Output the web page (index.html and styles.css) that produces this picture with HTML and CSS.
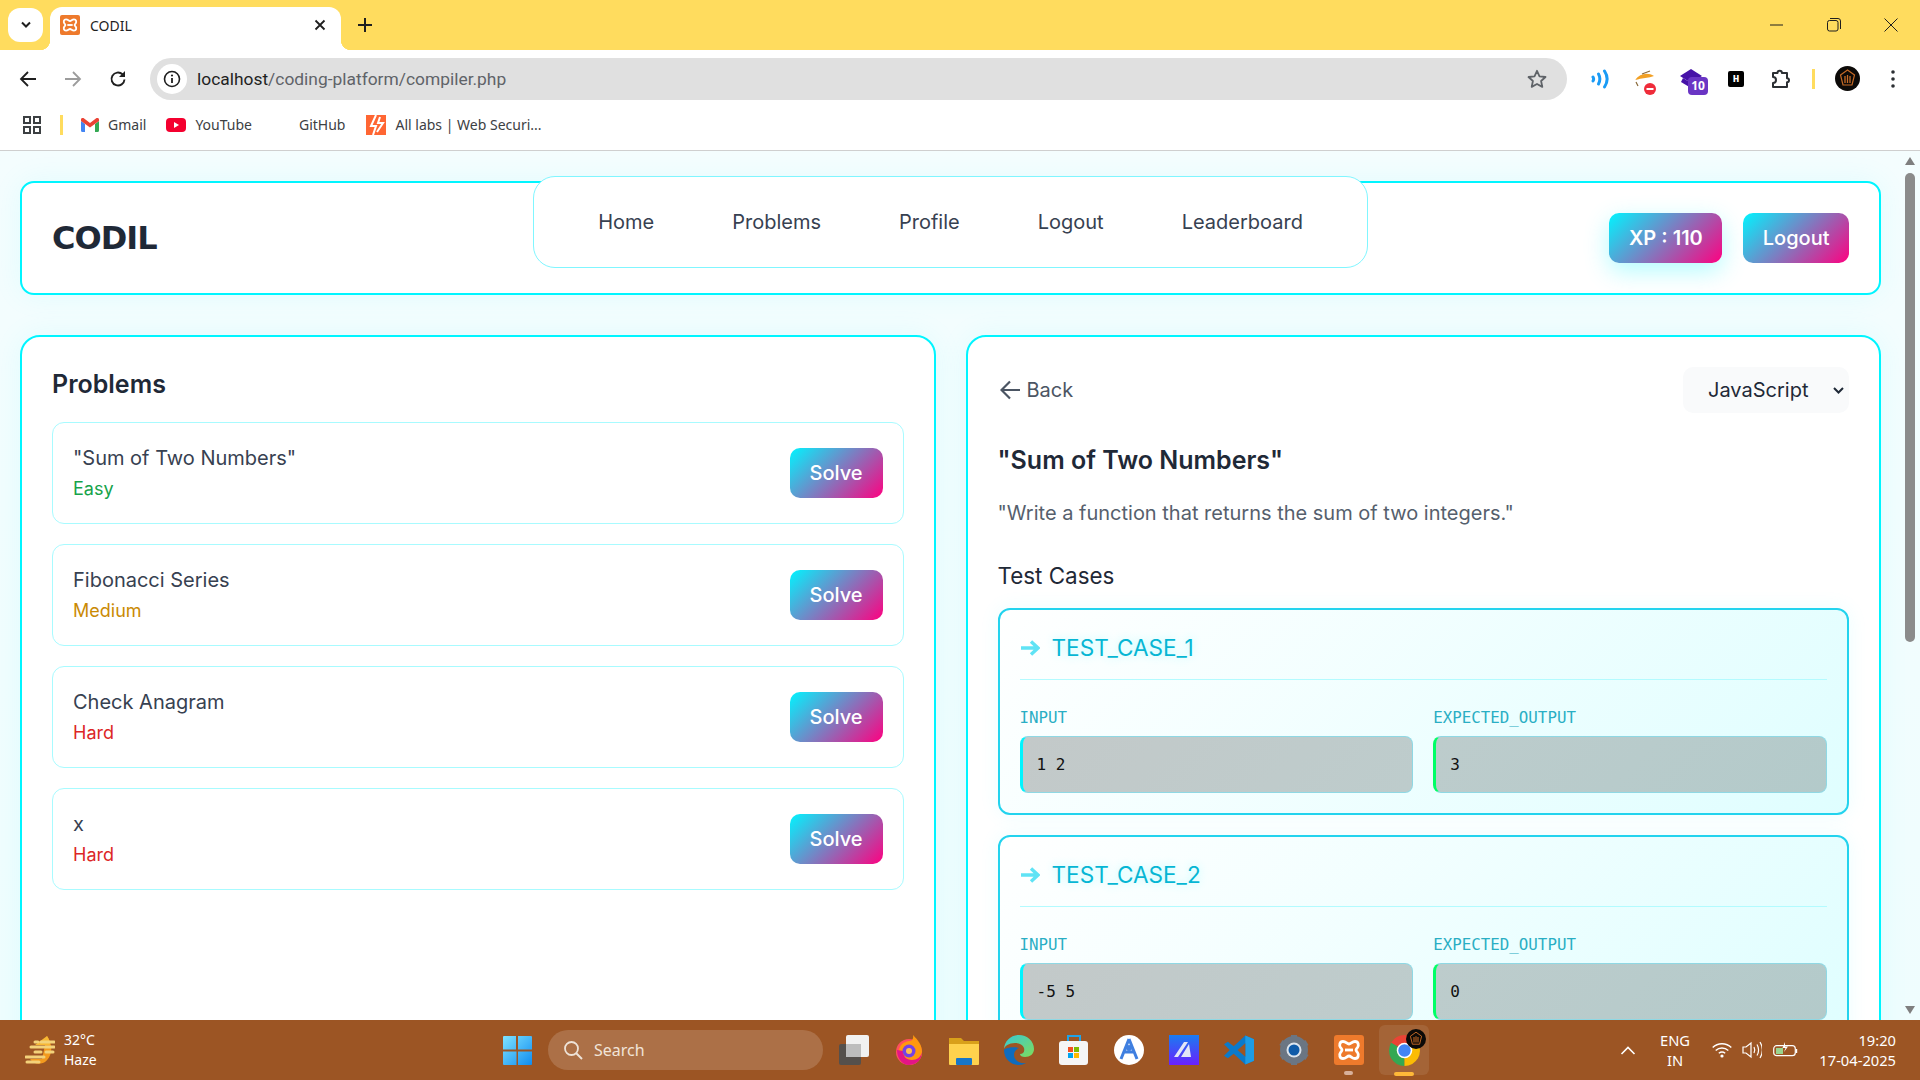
FILE: index.html
```html
<!DOCTYPE html>
<html lang="en">
<head>
<meta charset="utf-8">
<title>CODIL</title>
<link rel="stylesheet" href="styles.css">
</head>
<body>
<svg class="defs" aria-hidden="true">
  <symbol id="xampp" viewBox="0 0 30 30">
    <rect width="30" height="30" rx="3" fill="#ee7a2c"/>
    <path d="M9 6.5c3 0 4 2.500 6 2.500s3-2.500 6-2.500c3.500 0 4 4 2.500 6-.8 1-1.500 1.500-1.500 2.500s.7 1.500 1.500 2.500c1.500 2 1 6-2.500 6-3 0-4-2.500-6-2.500s-3 2.500-6 2.500c-3.500 0-4-4-2.500-6 .8-1 1.500-1.500 1.500-2.500s-.7-1.500-1.500-2.500C5 10.500 5.500 6.500 9 6.500z" fill="none" stroke="#fff" stroke-width="2.800"/>
    <path d="M11 15h8" stroke="#fff" stroke-width="2.800"/>
  </symbol>
  <symbol id="avatar" viewBox="0 0 25 25">
    <circle cx="12.500" cy="12.500" r="12.500" fill="#0c0a08"/>
    <path d="M12.500 4l7 5-2.500 10H8L5.500 9z" fill="none" stroke="#c66a26" stroke-width="1.200"/>
    <path d="M10 10v7M12.500 9v8M15 10v7" stroke="#c66a26" stroke-width="1.300"/>
  </symbol>
</svg>
<div class="screen">
  <div class="tabstrip">
    <div class="tab-menu"><svg width="12" height="8" viewBox="0 0 12 8"><path d="M2 1.500l4 4 4-4" fill="none" stroke="#1f1f1f" stroke-width="2"/></svg></div>
    <div class="tab">
      <svg class="fav" width="20" height="20"><use href="#xampp"/></svg>
      <span class="tab-title">CODIL</span>
      <svg class="tab-x" width="12" height="12" viewBox="0 0 12 12"><path d="M1.500 1.500l9 9M10.500 1.500l-9 9" stroke="#1f1f1f" stroke-width="1.800"/></svg>
    </div>
    <svg class="tab-plus" width="14" height="14" viewBox="0 0 14 14"><path d="M7 0v14M0 7h14" stroke="#1f1f1f" stroke-width="2"/></svg>
    <div class="winctl">
      <svg width="14" height="14" viewBox="0 0 14 14"><path d="M0 7h13" stroke="#1f1f1f"/></svg>
      <svg width="14" height="14" viewBox="0 0 14 14"><rect x=".5" y="2.500" width="10.500" height="10.500" rx="2" fill="none" stroke="#1f1f1f"/><path d="M3 .5h8a2.500 2.500 0 0 1 2.500 2.500v8" fill="none" stroke="#1f1f1f"/></svg>
      <svg width="14" height="14" viewBox="0 0 14 14"><path d="M.5.500l13 13M13.500.5l-13 13" stroke="#1f1f1f"/></svg>
    </div>
  </div>

  <div class="toolbar">
    <svg class="nav-ic" width="18" height="18" viewBox="0 0 18 18"><path d="M17 9H2M9 2L2 9l7 7" fill="none" stroke="#1f1f1f" stroke-width="1.800"/></svg>
    <svg class="nav-ic fw" width="18" height="18" viewBox="0 0 18 18"><path d="M1 9h15M9 2l7 7-7 7" fill="none" stroke="#9c9c9c" stroke-width="1.800"/></svg>
    <svg class="nav-ic rl" width="18" height="18" viewBox="0 0 18 18"><path d="M15.500 9.500A6.500 6.500 0 1 1 13.500 4.300" fill="none" stroke="#1f1f1f" stroke-width="1.900"/><path d="M16 1v6h-6z" fill="#1f1f1f"/></svg>
    <div class="omnibox">
      <div class="info"><svg width="18" height="18" viewBox="0 0 18 18"><circle cx="9" cy="9" r="7.500" fill="none" stroke="#1f1f1f" stroke-width="1.600"/><path d="M9 8v5" stroke="#1f1f1f" stroke-width="1.800"/><circle cx="9" cy="5.500" r="1.100" fill="#1f1f1f"/></svg></div>
      <span class="url"><span class="host">localhost</span>/coding-platform/compiler.php</span>
      <svg class="star" width="20" height="20" viewBox="0 0 20 20"><path d="M10 1.800l2.500 5.500 6 .7-4.400 4 1.200 5.900L10 15l-5.300 2.900 1.200-5.900-4.400-4 6-.7z" fill="none" stroke="#5f6368" stroke-width="1.800" stroke-linejoin="round"/></svg>
    </div>
    <div class="exts">
      <svg class="ext e1" width="18" height="20" viewBox="0 0 18 20"><g fill="none" stroke="#1a9bf5" stroke-width="3" stroke-linecap="round"><path d="M2 8c.8 1.300.8 2.800 0 4"/><path d="M7.500 5c1.800 3.300 1.800 6.700 0 10"/><path d="M13.500 2c3.300 5 3.300 11 0 16"/></g></svg>
      <svg class="ext e2" width="24" height="28" viewBox="0 0 24 28"><path d="M1 12c5-7 13-8 19-4-5 2-12 2-19 4z" fill="#f2a024"/><path d="M8 6l8-3M2 14l2 4" stroke="#8a6a3a" stroke-width="1.200"/><circle cx="16" cy="21" r="6" fill="#ef2c3a"/><path d="M12.500 21h7" stroke="#fff" stroke-width="2"/></svg>
      <div class="ext e3"><svg width="22" height="20" viewBox="0 0 22 20"><path d="M11 0l11 7-11 7L0 7z" fill="#4612a8"/><path d="M3 9l8 5v5L1 13z" fill="#4612a8"/></svg><span class="e3-badge">10</span></div>
      <div class="ext e4">H</div>
      <svg class="ext e5" width="22" height="22" viewBox="0 0 22 22"><path d="M3 5h4.500a2.200 2.200 0 0 1 4.400 0H17v5.200a2 2 0 0 1 0 4V19H3v-4a3 3 0 0 0 0-6z" fill="none" stroke="#2b2f33" stroke-width="2" stroke-linejoin="round"/></svg>
      <span class="ext-sep"></span>
      <svg class="ext e6" width="25" height="25"><use href="#avatar"/></svg>
      <svg class="ext e7" width="6" height="18" viewBox="0 0 6 18"><circle cx="3" cy="2" r="1.800" fill="#2b2f33"/><circle cx="3" cy="9" r="1.800" fill="#2b2f33"/><circle cx="3" cy="16" r="1.800" fill="#2b2f33"/></svg>
    </div>
  </div>

  <div class="bookmarks">
    <svg class="apps" width="18" height="18" viewBox="0 0 18 18"><g fill="none" stroke="#3c4043" stroke-width="2"><rect x="1" y="1" width="6" height="6"/><rect x="11" y="1" width="6" height="6"/><rect x="1" y="11" width="6" height="6"/><rect x="11" y="11" width="6" height="6"/></g></svg>
    <span class="bm-sep"></span>
    <span class="bm bm-gmail"><svg width="18" height="14" viewBox="0 0 18 14"><path d="M0 3v9.500A1.500 1.500 0 0 0 1.500 14H4V6z" fill="#4285f4"/><path d="M14 6v8h2.500a1.500 1.500 0 0 0 1.500-1.500V3z" fill="#34a853"/><path d="M0 3l9 6.500L18 3V1.500C18 0 16.300-.5 15.200.3L9 5 2.800.3C1.700-.5 0 0 0 1.500z" fill="#ea4335"/></svg>Gmail</span>
    <span class="bm bm-yt"><svg width="20" height="14" viewBox="0 0 20 14"><rect width="20" height="14" rx="4" fill="#f4002f"/><path d="M8 4l5 3-5 3z" fill="#fff"/></svg>YouTube</span>
    <span class="bm bm-gh">GitHub</span>
    <span class="bm bm-labs"><svg width="20" height="20" viewBox="0 0 20 20"><rect width="20" height="20" fill="#ff6633"/><path d="M10 0L5 11h5l-3 9M14 2l-2 6h5l-6 9" fill="none" stroke="#fff" stroke-width="2"/></svg>All labs | Web Securi...</span>
  </div>

  <div class="viewport">
    <main class="page">
      <header class="site-head">
        <div class="logo">CODIL</div>
        <nav class="site-nav">
          <a>Home</a><a>Problems</a><a>Profile</a><a>Logout</a><a>Leaderboard</a>
        </nav>
        <div class="head-actions">
          <button class="grad-btn xp">XP : 110</button>
          <button class="grad-btn">Logout</button>
        </div>
      </header>

      <div class="columns">
        <section class="panel">
          <h2 class="panel-title">Problems</h2>
          <div class="problem-list">
            <article class="problem"><div><div class="p-name">"Sum of Two Numbers"</div><div class="p-level easy">Easy</div></div><button class="grad-btn solve">Solve</button></article>
            <article class="problem"><div><div class="p-name">Fibonacci Series</div><div class="p-level medium">Medium</div></div><button class="grad-btn solve">Solve</button></article>
            <article class="problem"><div><div class="p-name">Check Anagram</div><div class="p-level hard">Hard</div></div><button class="grad-btn solve">Solve</button></article>
            <article class="problem"><div><div class="p-name">x</div><div class="p-level hard">Hard</div></div><button class="grad-btn solve">Solve</button></article>
          </div>
        </section>

        <section class="panel">
          <div class="detail-top">
            <span class="back"><svg width="21" height="20" viewBox="0 0 21 20"><path d="M20 10H2M10 1.500L1.500 10l8.500 8.500" fill="none" stroke="#4b5563" stroke-width="2.200"/></svg>Back</span>
            <div class="lang"><span>JavaScript</span><svg width="11" height="7" viewBox="0 0 11 7"><path d="M1 1l4.500 4.500L10 1" fill="none" stroke="#1f2937" stroke-width="2"/></svg></div>
          </div>
          <h2 class="detail-title">"Sum of Two Numbers"</h2>
          <p class="detail-desc">"Write a function that returns the sum of two integers."</p>
          <h3 class="tc-head">Test Cases</h3>

          <div class="tc">
            <div class="tc-title"><svg width="20" height="16" viewBox="0 0 20 16"><path d="M1 8h17M11 1.500L18 8l-7 6.500" fill="none" stroke="#5fe3f5" stroke-width="3.400"/></svg>TEST_CASE_1</div>
            <div class="tc-grid">
              <div><div class="tc-label">INPUT</div><div class="tc-val">1 2</div></div>
              <div><div class="tc-label">EXPECTED_OUTPUT</div><div class="tc-val out">3</div></div>
            </div>
          </div>

          <div class="tc">
            <div class="tc-title"><svg width="20" height="16" viewBox="0 0 20 16"><path d="M1 8h17M11 1.500L18 8l-7 6.500" fill="none" stroke="#5fe3f5" stroke-width="3.400"/></svg>TEST_CASE_2</div>
            <div class="tc-grid">
              <div><div class="tc-label">INPUT</div><div class="tc-val">-5 5</div></div>
              <div><div class="tc-label">EXPECTED_OUTPUT</div><div class="tc-val out">0</div></div>
            </div>
          </div>
        </section>
      </div>
    </main>
    <aside class="scrollbar">
      <span class="sb-up"></span>
      <span class="sb-thumb"></span>
      <span class="sb-down"></span>
    </aside>
  </div>

  <footer class="taskbar">
    <div class="weather">
      <svg width="30" height="28" viewBox="0 0 30 28"><path d="M22 0c6 8 6 20-2 26-5 3-12 2-15-3h12z" fill="#f39a1e"/><path d="M22 0c2 3 3 6 3 9H10z" fill="#f7b733"/><g stroke="#f3d27a" stroke-width="3" stroke-linecap="round"><path d="M10 6h3M16 6h13M6 11h23M10 16h6M21 16h7M1 21h18M2 26h12"/></g></svg>
      <div class="weather-t"><div>32°C</div><div>Haze</div></div>
    </div>
    <svg class="winlogo" width="29" height="29" viewBox="0 0 29 29"><defs><linearGradient id="w" x1="0" y1="0" x2="1" y2="1"><stop offset="0" stop-color="#7fe3ff"/><stop offset="1" stop-color="#0f8cf0"/></linearGradient></defs><path d="M0 1a1 1 0 0 1 1-1h12v13.500H0zM15 0h13a1 1 0 0 1 1 1v12.500H15zM0 15.500h13.500V29H1a1 1 0 0 1-1-1zM15 15.500h14V28a1 1 0 0 1-1 1H15z" fill="url(#w)"/></svg>
    <div class="search"><svg width="20" height="20" viewBox="0 0 20 20"><circle cx="8.500" cy="8.500" r="6.500" fill="none" stroke="#eee3d8" stroke-width="1.800"/><path d="M13 13l6 6" stroke="#eee3d8" stroke-width="2"/></svg>Search</div>
    <div class="dock">
      <svg width="30" height="30" viewBox="0 0 30 30"><rect y="9" width="22" height="21" rx="2" fill="#55504c"/><rect x="7" width="23" height="22" rx="2" fill="#f1f1f1"/><rect x="7" y="9" width="15" height="13" fill="#bdbdbd"/></svg>
      <svg width="30" height="30" viewBox="0 0 30 30"><circle cx="15" cy="17" r="13" fill="#ff4f5e"/><path d="M15 30A13 13 0 0 0 28 17C28 10 24 5 19 0c1 5-2 6-4 6-6 1-9 4-10 9z" fill="#ff980e"/><path d="M3 15c0 9 6 15 12 15 8 0 13-6 13-13-1 5-5 8-10 8-6 0-9-4-9-9z" fill="#e31587"/><circle cx="15" cy="16" r="6.500" fill="#7542e5"/><circle cx="15" cy="16" r="3" fill="#ffbd4f"/></svg>
      <svg width="30" height="30" viewBox="0 0 30 30"><path d="M0 3h12l3 3h15v6H0z" fill="#d9a01a"/><path d="M0 9h30v20a1 1 0 0 1-1 1H1a1 1 0 0 1-1-1z" fill="#ffd24d"/><rect x="7" y="23" width="16" height="7" rx="1" fill="#1776c9"/></svg>
      <svg width="30" height="30" viewBox="0 0 30 30"><defs><linearGradient id="ed" x1="0" y1="0" x2="1" y2="1"><stop offset="0" stop-color="#37c9d6"/><stop offset="1" stop-color="#7fdc5a"/></linearGradient></defs><path d="M0 15C0 6 7 0 15 0c8 0 15 6 15 14 0 5-4 8-9 8-3 0-5-1-5-3 3 0 5-2 4-6-1-3-5-5-9-5-6 0-11 3-11 7z" fill="url(#ed)"/><path d="M0 15C0 24 7 30 15 30c3 0 5-1 7-2-7 1-12-3-12-8 0-3 2-6 5-7-8-2-15 1-15 2z" fill="#0f6cbd"/></svg>
      <svg width="30" height="30" viewBox="0 0 30 30"><path d="M9 6V1h12v5" fill="none" stroke="#1fa3e8" stroke-width="2"/><rect y="6" width="29" height="24" rx="3" fill="#f5f5f5"/><rect x="9" y="12" width="5" height="5" fill="#f25022"/><rect x="15" y="12" width="5" height="5" fill="#7fba00"/><rect x="9" y="18" width="5" height="5" fill="#00a4ef"/><rect x="15" y="18" width="5" height="5" fill="#ffb900"/></svg>
      <svg width="30" height="30" viewBox="0 0 30 30"><circle cx="15" cy="15" r="15" fill="#fff"/><path d="M15 4L7 24M15 4l8 20M9 17h12" fill="none" stroke="#3f7fe0" stroke-width="3"/><circle cx="15" cy="13" r="3" fill="#3f7fe0"/></svg>
      <svg width="30" height="30" viewBox="0 0 30 30"><defs><linearGradient id="bl" x1="0" y1="0" x2="0" y2="1"><stop offset="0" stop-color="#1a7cf0"/><stop offset="1" stop-color="#6a20ff"/></linearGradient></defs><rect width="30" height="30" fill="url(#bl)"/><path d="M5 22L15 7h4L9 22zM12 22l8-13 2 13z" fill="#e4e6f7"/></svg>
      <svg width="30" height="30" viewBox="0 0 31 30"><path d="M22 0l9 4v22l-9 4-12-11-6 4.500L0 21l6-6-6-6 4-2.500L10 11z" fill="#0a7acb"/><path d="M22 0l9 4v22l-9 4z" fill="#1d9ce5"/><path d="M22 8l-8 7 8 7z" fill="#9c5524"/></svg>
      <svg width="30" height="30" viewBox="0 0 30 30"><circle cx="15" cy="15" r="10" fill="none" stroke="#6b7683" stroke-width="8"/><path d="M15 0v6M15 24v6M2 7.500l5 3M23 19.500l5 3M2 22.500l5-3M23 10.500l5-3" stroke="#6b7683" stroke-width="6"/><circle cx="15" cy="15" r="7.500" fill="#dde5ed"/><circle cx="15" cy="15" r="5.500" fill="#0f5ba8"/></svg>
      <div class="dock-item"><svg width="30" height="30"><use href="#xampp"/></svg><span class="pip"></span></div>
      <div class="dock-item active">
        <svg width="31" height="31" viewBox="4 4 40 40"><path d="M24 24L6.700 14A20 20 0 0 1 41.300 14z" fill="#ea4335"/><path d="M24 24L6.700 14A20 20 0 0 0 24 44z" fill="#34a853"/><path d="M24 24L24 44A20 20 0 0 0 41.300 14z" fill="#fbbc04"/><circle cx="24" cy="24" r="10" fill="#fff"/><circle cx="24" cy="24" r="8" fill="#4285f4"/></svg>
        <svg class="dock-avatar" width="20" height="20"><use href="#avatar"/></svg>
        <span class="pip on"></span>
      </div>
    </div>
    <div class="tray">
      <svg class="t-chev" width="16" height="9" viewBox="0 0 16 9"><path d="M1.500 8L8 1.500 14.500 8" fill="none" stroke="#fff" stroke-width="1.600"/></svg>
      <div class="t-lang"><div>ENG</div><div>IN</div></div>
      <svg class="t-wifi" width="20" height="16" viewBox="0 0 20 16"><g fill="none" stroke="#fff" stroke-width="1.400"><path d="M.7 5.500c5-5 13.600-5 18.600 0"/><path d="M3.700 8.500c3.500-3.300 9-3.300 12.600 0"/><path d="M6.800 11.300c2-1.600 4.400-1.600 6.400 0"/></g><circle cx="10" cy="14" r="1.600" fill="#fff"/></svg>
      <svg class="t-vol" width="20" height="18" viewBox="0 0 20 18"><g fill="none" stroke="#fff" stroke-width="1.200"><path d="M1 6h3l5-4v14l-5-4H1z"/><path d="M12 6c1 2 1 4 0 6"/><path d="M15 3.500c2 3.500 2 7.500 0 11"/><path d="M18 1c3 5 3 11 0 16" /></g></svg>
      <svg class="t-bat" width="25" height="16" viewBox="0 0 25 16"><rect x=".7" y="3.700" width="21.600" height="10" rx="3" fill="none" stroke="#fff" stroke-width="1.200"/><rect x="3" y="6" width="7" height="6" fill="#9ad58e"/><path d="M23.500 7v4" stroke="#fff" stroke-width="1.400"/><path d="M12 0l-2.500 6h3L11 10l4-5.500h-3z" fill="#fff"/></svg>
      <div class="t-clock"><div>19:20</div><div>17-04-2025</div></div>
    </div>
  </footer>
</div>
</body>
</html>
```

FILE: styles.css
```css
* { box-sizing: border-box; }
html, body { margin: 0; height: 100%; overflow: hidden; }
body { font-family: Inter, "Noto Sans", sans-serif; color: #1f2937; }
.defs { width: 0; height: 0; display: block; }
.screen { height: 1080px; display: flex; flex-direction: column; }

/* browser chrome */
.tabstrip { height: 50px; background: #ffdc5e; display: flex; align-items: flex-start; padding-left: 8px; flex: none; }
.tab-menu { width: 35px; height: 34px; margin-top: 8px; background: #fff; border-radius: 12px; display: flex; align-items: center; justify-content: center; }
.tab { width: 291px; height: 43px; margin: 7px 0 0 7px; background: #fff; border-radius: 12px 12px 0 0; display: flex; align-items: center; padding: 0 15px 7px 10px; font-family: "Noto Sans", sans-serif; font-size: 14px; position: relative; }
.tab::before, .tab::after { content: ""; position: absolute; bottom: 0; width: 10px; height: 10px; }
.tab::before { left: -10px; background: radial-gradient(circle at 0 0, transparent 10px, #fff 10.5px); }
.tab::after { right: -10px; background: radial-gradient(circle at 100% 0, transparent 10px, #fff 10.5px); }
.fav { flex: none; }
.tab-title { margin-left: 10px; flex: 1; color: #1f1f1f; }
.tab-plus { margin: 18px 0 0 17px; }
.winctl { margin: 18px 22px 0 auto; display: flex; gap: 43px; }

.toolbar { height: 55px; background: #fff; border-radius: 12px 12px 0 0; display: flex; align-items: flex-start; padding: 8px 0 0 19px; flex: none; position: relative; }
.nav-ic { margin-top: 12px; flex: none; }
.fw { margin-left: 27px; }
.rl { margin-left: 27px; }
.omnibox { width: 1417px; height: 42px; margin-left: 23px; background: #e0e0e0; border-radius: 21px; display: flex; align-items: center; padding: 0 20px 0 7px; font-family: Roboto, sans-serif; font-size: 17.400px; color: #5f6368; }
.info { width: 30px; height: 30px; border-radius: 50%; background: #fff; display: flex; align-items: center; justify-content: center; flex: none; }
.url { margin-left: 10px; flex: 1; }
.host { color: #1f1f1f; }
.exts { display: flex; align-items: center; height: 42px; flex: 1; position: relative; }
.ext { position: absolute; }
.e1 { left: 24px; top: 11px; }
.e2 { left: 67px; top: 10px; }
.e3 { left: 113px; top: 11px; width: 30px; height: 30px; }
.e3-badge { position: absolute; left: 8px; top: 8px; width: 20px; height: 18px; background: #6a35c4; color: #fff; border-radius: 4px; font: 700 12px/18px "Noto Sans", sans-serif; text-align: center; }
.e4 { left: 161px; top: 13px; width: 16px; height: 16px; background: #000; color: #fff; border-radius: 2px; font: 700 11px/16px "Liberation Mono", monospace; text-align: center; }
.e5 { left: 203px; top: 10px; }
.ext-sep { position: absolute; left: 245px; top: 11px; width: 3px; height: 20px; background: #ffdc5e; }
.e6 { left: 268px; top: 8px; }
.e7 { left: 323px; top: 12px; }

.bookmarks { height: 46px; background: #fff; border-bottom: 1px solid #cfcfcf; display: flex; align-items: center; padding: 0 0 6px 23px; font-family: "Noto Sans", sans-serif; font-size: 14px; color: #3c4043; flex: none; }
.bm-sep { width: 3px; height: 20px; background: #ffdc5e; margin-left: 19px; }
.bm { display: inline-flex; align-items: center; gap: 9px; }
.bm-gmail { margin-left: 18px; }
.bm-yt { margin-left: 20px; }
.bm-gh { margin-left: 47px; }
.bm-labs { margin-left: 21px; }

/* page */
.viewport { flex: 1; min-height: 0; display: flex; overflow: hidden; background: linear-gradient(180deg, #f4fdfe, #effdfe); }
.page { flex: 1; min-width: 0; padding: 30px 19px 0 20px; }
.scrollbar { width: 20px; flex: none; display: flex; flex-direction: column; align-items: center; padding-top: 6px; padding-bottom: 6px; }
.sb-up { width: 0; height: 0; border: 5px solid transparent; border-top: 0; border-bottom: 8px solid #7f7f7f; }
.sb-thumb { width: 10px; height: 469px; margin-top: 8px; background: #8b8b8b; border-radius: 5px; }
.sb-down { width: 0; height: 0; margin-top: auto; border: 5px solid transparent; border-bottom: 0; border-top: 8px solid #7f7f7f; }

.site-head { height: 114px; background: #fff; border: 2px solid #00f5ff; border-radius: 14px; display: grid; grid-template-columns: 1fr auto 1fr; align-items: center; padding: 0 30px; box-shadow: 0 0 30px rgba(0, 245, 255, .08); }
.logo { font: 700 32px/1 "DejaVu Sans", sans-serif; letter-spacing: -1px; color: #1f2937; }
.site-nav { height: 92px; margin-top: -32px; background: #fff; border: 1px solid #80f6ff; border-radius: 22px; display: flex; align-items: center; gap: 78px; padding: 0 64px; font-size: 20px; color: #374151; }
.head-actions { display: flex; justify-content: flex-end; gap: 21px; }
.grad-btn { height: 50px; border: 0; border-radius: 10px; padding: 0 19.500px; background: linear-gradient(135deg, #00f5ff, #ff0080); color: #fff; font: 500 20px Inter, sans-serif; }
.xp { font-weight: 600; box-shadow: 0 8px 24px rgba(0, 245, 255, .3); }
.solve { width: 93px; padding: 0; }

.columns { display: grid; grid-template-columns: 1fr 1fr; gap: 30px; margin-top: 40px; }
.panel { background: #fff; border: 2px solid #00f5ff; border-radius: 20px; padding: 30px 30px 40px; box-shadow: 0 0 30px rgba(0, 245, 255, .08); }
.panel-title { margin: 0 0 20px; font-size: 25px; line-height: 35px; font-weight: 600; }
.problem-list { display: flex; flex-direction: column; gap: 20px; }
.problem { height: 102px; border: 1px solid #a8fbff; border-radius: 12px; display: flex; align-items: center; justify-content: space-between; padding: 0 20px; }
.p-name { font-size: 20px; line-height: 30px; color: #374151; }
.p-level { font-size: 18px; line-height: 28px; margin-top: 2px; }
.easy { color: #16a34a; }
.medium { color: #ca8a04; }
.hard { color: #dc2626; }

.detail-top { display: flex; justify-content: space-between; align-items: center; height: 46px; }
.back { display: inline-flex; align-items: center; gap: 6px; font-size: 20px; color: #4b5563; margin-left: 2px; }
.lang { width: 166px; height: 46px; background: #f9fafb; border-radius: 10px; display: flex; align-items: center; justify-content: space-between; padding: 0 5px 0 25px; font-size: 20px; color: #1f2937; }
.detail-title { margin: 29px 0 0; font-size: 25px; line-height: 36px; font-weight: 600; }
.detail-desc { margin: 19px 0 0; font-size: 20px; line-height: 32px; color: #565f6d; }
.tc-head { margin: 31px 0 16px; font-size: 22.400px; line-height: 32px; font-weight: 400; }
.tc { height: 207px; margin-bottom: 20px; border: 2px solid #22d3ee; border-radius: 12px; padding: 20px; background: linear-gradient(135deg, #fff, #dffeff); box-shadow: 0 0 20px rgba(0, 245, 255, .08); }
.tc-title { display: flex; align-items: center; gap: 12px; height: 50px; padding-bottom: 14px; border-bottom: 1px solid #b3fbff; font-size: 22.600px; color: #06b6d4; text-shadow: 0 0 10px rgba(0, 245, 255, .3); }
.tc-grid { display: grid; grid-template-columns: 1fr 1fr; gap: 20px; margin-top: 28px; }
.tc-label { font: 15.800px/20px "DejaVu Sans Mono", monospace; color: #2aaec4; }
.tc-val { height: 57px; margin-top: 8px; padding-left: 14px; display: flex; align-items: center; border: 1px solid #8fd8e4; border-left: 3px solid #00f5ff; border-radius: 8px; background: linear-gradient(135deg, #c3c9c9, #bdcccc); font: 16px "DejaVu Sans Mono", monospace; color: #111; }
.out { border-left-color: #00ff66; background: linear-gradient(135deg, #bdcccc, #b3caca); }

/* taskbar */
.taskbar { height: 60px; flex: none; background: #9c5524; display: flex; align-items: center; color: #fff; font-family: "Noto Sans", sans-serif; font-size: 14px; position: relative; }
.weather { display: flex; align-items: center; gap: 9px; margin-left: 25px; width: 478px; }
.weather-t { line-height: 20px; font-size: 14px; }
.search { width: 275px; height: 40px; margin-left: 16px; background: rgba(255, 255, 255, .16); border-radius: 20px; display: flex; align-items: center; gap: 11px; padding-left: 15px; font-size: 16px; color: #f1e4d8; }
.dock { display: flex; align-items: center; gap: 25px; margin-left: 16px; }
.dock svg { display: block; }
.dock-item { position: relative; }
.pip { position: absolute; left: 10px; bottom: -10px; width: 9px; height: 4px; border-radius: 2px; background: #d8b09a; }
.dock-item.active::before { content: ""; position: absolute; left: -10px; top: -10px; width: 50px; height: 50px; border-radius: 6px; background: rgba(255, 255, 255, .09); }
.dock-item.active svg { position: relative; }
.dock-avatar { position: absolute !important; right: -6px; top: -6px; }
.pip.on { left: 5px; bottom: -10px; width: 20px; background: #ffb938; }
.tray { position: absolute; inset: 0 24px 0 auto; display: flex; align-items: center; font-size: 14.700px; }
.t-chev { margin-right: 21px; }
.t-lang { text-align: center; line-height: 20px; width: 36px; margin-right: 19px; }
.t-vol { margin-left: 10px; }
.t-bat { margin-left: 11px; }
.t-clock { margin-left: 13px; width: 85px; text-align: right; line-height: 20px; }
```
